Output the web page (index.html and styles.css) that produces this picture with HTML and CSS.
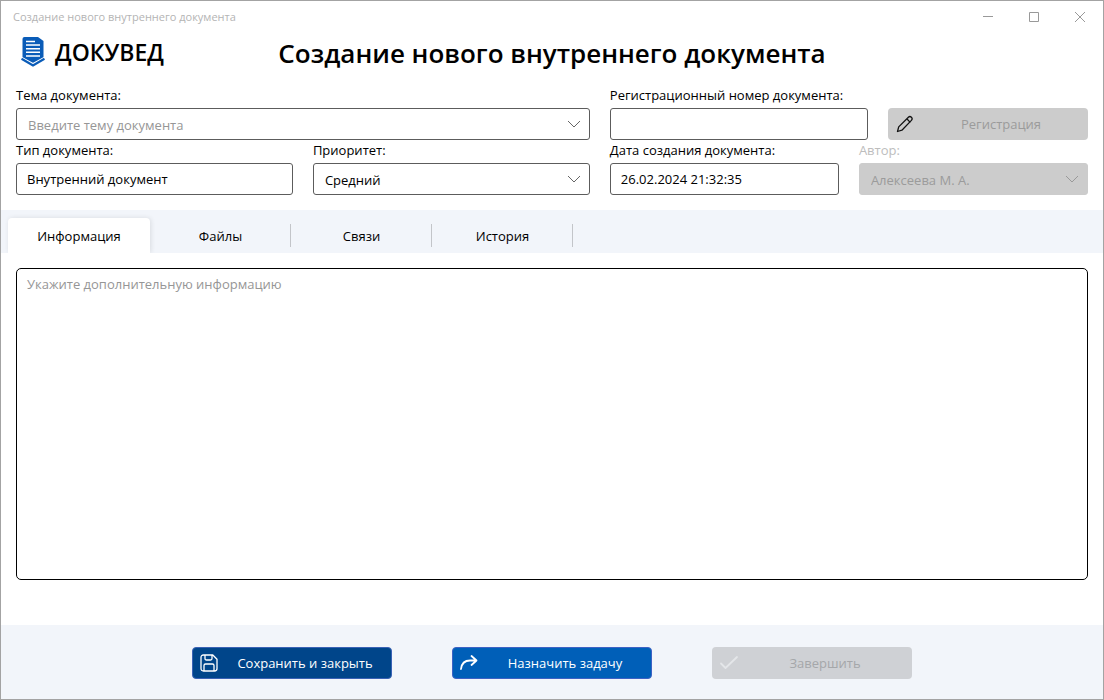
FILE: index.html
```html
<!DOCTYPE html>
<html lang="ru">
<head>
<meta charset="utf-8">
<title>Создание нового внутреннего документа</title>
<link rel="stylesheet" href="styles.css">
</head>
<body>
<div class="window">
  <div class="titlebar">
    <span class="titlebar-text">Создание нового внутреннего документа</span>
    <div class="window-controls">
      <button class="window-button" type="button" aria-label="Свернуть"><svg width="12" height="12" viewBox="0 0 12 12"><path d="M1 5.5h10"/></svg></button>
      <button class="window-button" type="button" aria-label="Развернуть"><svg width="12" height="12" viewBox="0 0 12 12"><path d="M1.500 1.500h9v9h-9z"/></svg></button>
      <button class="window-button" type="button" aria-label="Закрыть"><svg width="12" height="12" viewBox="0 0 12 12"><path d="M1 1l10 10M11 1L1 11"/></svg></button>
    </div>
  </div>

  <header class="header">
    <div class="brand">
      <svg class="brand-icon" width="24" height="30" viewBox="0 0 24 30" aria-hidden="true">
        <path fill="#0a5cb8" d="M3.500 0H17l5.500 4v17L12 27 1.500 21V2q0-2 2-2z"/>
        <path fill="none" stroke="#fff" stroke-width="1.400" d="M0 20l12 6.500L24 20"/>
        <path fill="none" stroke="#0a5cb8" stroke-width="2.200" d="M.5 21.800L12 28.500l11.500-6.700"/>
        <path fill="none" stroke="#fff" stroke-width="1.500" d="M5 4.500h9M5 8.100h14M5 11.700h14M5 15.300h14M5 18.900h14"/>
      </svg>
      <span class="brand-name">ДОКУВЕД</span>
    </div>
    <h1 class="page-title">Создание нового внутреннего документа</h1>
  </header>

  <form class="form">
    <div class="fields">
      <div class="field">
        <label for="subject">Тема документа:</label>
        <div class="select-box">
          <select class="control control-select is-empty" id="subject"><option>Введите тему документа</option></select>
          <svg class="chevron" width="14" height="8" viewBox="0 0 14 8"><path d="M1 1l6 6 6-6"/></svg>
        </div>
      </div>
      <div class="number-row">
        <div class="field">
          <label for="number">Регистрационный номер документа:</label>
          <input class="control" id="number" type="text">
        </div>
        <button class="button button-disabled" type="button" disabled>
          <svg class="button-icon icon-dark" width="18" height="18" viewBox="0 0 18 18"><path d="M1.500 16.500l1.200-4.600L12.400 2.200q1.500-1.400 3 0t0 3.200L5.900 15.200zM10.800 3.800l3.200 3.300"/></svg>
          <span class="button-text">Регистрация</span>
        </button>
      </div>
      <div class="pair">
        <div class="field">
          <label for="type">Тип документа:</label>
          <input class="control" id="type" type="text" value="Внутренний документ">
        </div>
        <div class="field">
          <label for="priority">Приоритет:</label>
          <div class="select-box">
            <select class="control control-select" id="priority"><option>Средний</option></select>
            <svg class="chevron" width="14" height="8" viewBox="0 0 14 8"><path d="M1 1l6 6 6-6"/></svg>
          </div>
        </div>
      </div>
      <div class="pair">
        <div class="field">
          <label for="created">Дата создания документа:</label>
          <input class="control" id="created" type="text" value="26.02.2024 21:32:35">
        </div>
        <div class="field field-disabled">
          <label for="author">Автор:</label>
          <div class="select-box">
            <select class="control control-select" id="author" disabled><option>Алексеева М. А.</option></select>
            <svg class="chevron" width="14" height="8" viewBox="0 0 14 8"><path d="M1 1l6 6 6-6"/></svg>
          </div>
        </div>
      </div>
    </div>

    <div class="tabs" role="tablist">
      <button class="tab tab-active" type="button" role="tab" aria-selected="true">Информация</button>
      <button class="tab" type="button" role="tab">Файлы</button>
      <button class="tab" type="button" role="tab">Связи</button>
      <button class="tab" type="button" role="tab">История</button>
    </div>

    <div class="panel" role="tabpanel">
      <textarea class="notes" aria-label="Дополнительная информация" placeholder="Укажите дополнительную информацию"></textarea>
    </div>

    <footer class="footer">
      <button class="button button-save" type="button">
        <svg class="button-icon" width="18" height="18" viewBox="0 0 18 18"><path d="M3.500 1h9.300L17 5.200v9.300q0 2.500-2.500 2.500h-11Q1 17 1 14.500v-11Q1 1 3.500 1zM5 1v3.500q0 1.500 1.500 1.500h4Q12 6 12 4.500V1M4 17v-5.500Q4 10 5.500 10h7q1.500 0 1.500 1.500V17"/></svg>
        <span class="button-text">Сохранить и закрыть</span>
      </button>
      <button class="button button-assign" type="button">
        <svg class="button-icon icon-bold" width="18" height="18" viewBox="0 0 18 18"><path d="M1 15q1-8.500 9-8.500h6M11.500 2l5 4.500-5 4.500"/></svg>
        <span class="button-text">Назначить задачу</span>
      </button>
      <button class="button button-finish" type="button" disabled>
        <svg class="button-icon icon-bold" width="18" height="18" viewBox="0 0 18 18"><path d="M1 9.500l4.500 4.500L17 3"/></svg>
        <span class="button-text">Завершить</span>
      </button>
    </footer>
  </form>
</div>
</body>
</html>
```
FILE: styles.css
```css
* {
  box-sizing: border-box;
}

body {
  margin: 0;
  font-family: "Segoe UI", "Open Sans", "Noto Sans", sans-serif;
  font-size: 13px;
  line-height: 20px;
  color: #000;
}

button,
input,
select,
textarea {
  font: inherit;
  color: inherit;
}

svg {
  display: block;
  fill: none;
  stroke: currentColor;
}

.window {
  display: flex;
  flex-direction: column;
  min-height: 100vh;
  border: 1px solid #a3a3a3;
  background: #fff;
}

.titlebar {
  display: flex;
  justify-content: space-between;
  align-items: center;
  height: 32px;
  padding-left: 12px;
  color: #b4b4b4;
  font-size: 11px;
}

.window-controls {
  display: flex;
  height: 32px;
  color: #999;
}

.window-button {
  display: grid;
  place-items: center;
  width: 46px;
  padding: 0;
  border: 0;
  background: none;
}

.header {
  display: grid;
  grid-template-columns: 1fr auto 1fr;
  align-items: center;
  height: 40px;
  padding: 0 20px;
}

.brand {
  display: flex;
  align-items: center;
  gap: 10px;
  padding-bottom: 2px;
}

.brand-icon {
  stroke: none;
}

.brand-name {
  font-size: 23px;
  font-weight: 600;
  line-height: 32px;
}

.page-title {
  margin: 0;
  font-size: 26px;
  font-weight: 600;
  line-height: 36px;
}

.form {
  display: flex;
  flex: 1;
  flex-direction: column;
}

.fields {
  display: grid;
  grid-template-columns: 6fr 5fr;
  gap: 0 20px;
  padding: 12px 15px 15px;
}

.pair {
  display: grid;
  grid-template-columns: 1fr 1fr;
  gap: 20px;
}

.number-row {
  display: flex;
  align-items: flex-end;
  gap: 20px;
}

.field {
  display: flex;
  flex: 1;
  flex-direction: column;
  gap: 3px;
  min-width: 0;
}

.control {
  width: 100%;
  height: 32px;
  padding: 0 10px;
  border: 1px solid #5c5c5c;
  border-radius: 3px;
  background: #fff;
}

.control-select {
  padding: 1px 11px 0;
  appearance: none;
}

.is-empty {
  color: #969696;
}

.select-box {
  position: relative;
}

.chevron {
  position: absolute;
  top: 12px;
  right: 9px;
  color: #666;
  pointer-events: none;
}

.field-disabled {
  color: #bdbdbd;
}

.field-disabled .control {
  border-color: #ccc;
  background: #ccc;
  color: #9b9b9b;
  opacity: 1;
}

.field-disabled .chevron {
  color: #999;
}

.button {
  display: flex;
  align-items: center;
  width: 200px;
  height: 32px;
  padding: 0 7px;
  border: 1px solid transparent;
  border-radius: 4px;
  color: #fff;
}

.button-icon {
  flex: none;
  stroke-width: 1.3;
  stroke-linecap: round;
  stroke-linejoin: round;
}

.icon-dark {
  color: #111;
}

.icon-bold {
  stroke-width: 1.8;
}

.button-text {
  flex: 1;
  padding-left: 8px;
  text-align: center;
}

.button-disabled {
  background: #ccc;
  color: #9b9b9b;
}

.button-save {
  border-color: #3a62b5;
  background: #00458a;
}

.button-assign {
  border-color: #3d62c4;
  background: #005fb8;
}

.button-finish {
  background: #cfd1d5;
  color: #a5a7aa;
}

.button-finish .button-icon {
  color: #e4e6e9;
}

.tabs {
  display: flex;
  height: 43px;
  padding: 8px 7px 0;
  background: #f2f5fa;
}

.tab {
  position: relative;
  width: 141px;
  padding: 0;
  border: 0;
  background: none;
}

.tab:not(.tab-active)::after {
  content: "";
  position: absolute;
  top: 6px;
  right: 0;
  width: 1px;
  height: 23px;
  background: #c3c5c9;
}

.tab-active {
  width: 142px;
  border-radius: 4px 4px 0 0;
  background: #fff;
  box-shadow: 1px 0 5px rgba(0, 0, 0, 0.1);
  clip-path: inset(-8px -8px 0 -8px);
}

.panel {
  display: flex;
  flex: 1;
  padding: 15px 15px 45px;
}

.notes {
  flex: 1;
  padding: 5px 10px;
  border: 1px solid #000;
  border-radius: 5px;
  background: #fff;
  resize: none;
}

.notes::placeholder {
  color: #969696;
}

.footer {
  display: flex;
  justify-content: center;
  gap: 60px;
  padding: 22px 15px 20px;
  background: #f2f5fa;
}
```
